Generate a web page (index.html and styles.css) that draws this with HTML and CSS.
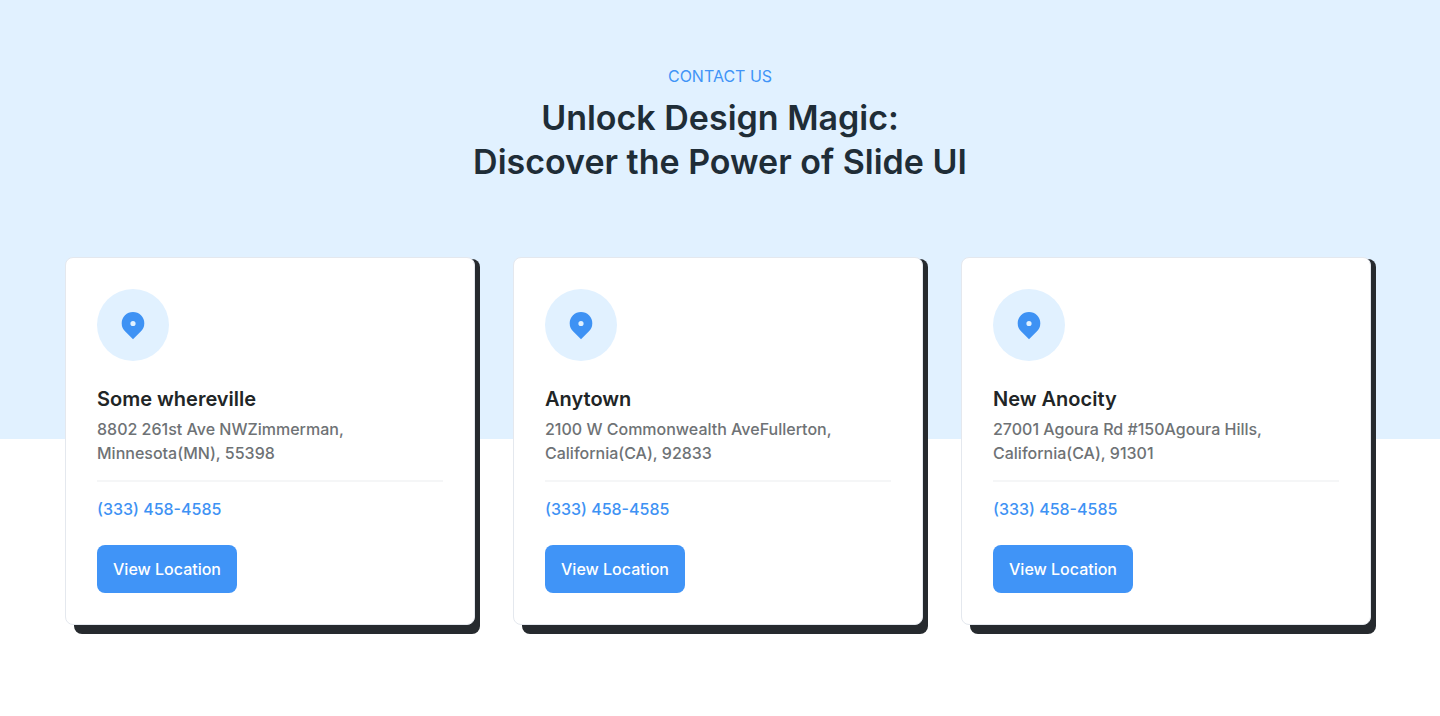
FILE: index.html
```html
<!DOCTYPE html>
<html lang="en">
<head>
<meta charset="utf-8">
<meta name="viewport" content="width=device-width, initial-scale=1">
<title>Contact us</title>
<link rel="stylesheet" href="styles.css">
</head>
<body>
<section class="contact">
  <header class="intro">
    <p class="eyebrow">CONTACT US</p>
    <h1 class="title">Unlock Design Magic:<br>Discover the Power of Slide UI</h1>
  </header>
  <div class="cards">
    <article class="card">
      <span class="badge"><svg class="pin" viewBox="0 0 32 32" aria-hidden="true"><path fill-rule="evenodd" d="M8 6.300a11.300 11.300 0 0 1 16 16l-8 8-8-8a11.300 11.300 0 0 1 0-16ZM16 11.900a2.600 2.600 0 1 0 0 5.200 2.600 2.600 0 0 0 0-5.200Z"/></svg></span>
      <h2 class="city">Some whereville</h2>
      <p class="address">8802 261st Ave NWZimmerman,<br>Minnesota(MN), 55398</p>
      <hr class="rule">
      <a class="phone" href="tel:3334584585">(333) 458-4585</a>
      <button class="button" type="button">View Location</button>
    </article>
    <article class="card">
      <span class="badge"><svg class="pin" viewBox="0 0 32 32" aria-hidden="true"><path fill-rule="evenodd" d="M8 6.300a11.300 11.300 0 0 1 16 16l-8 8-8-8a11.300 11.300 0 0 1 0-16ZM16 11.900a2.600 2.600 0 1 0 0 5.200 2.600 2.600 0 0 0 0-5.200Z"/></svg></span>
      <h2 class="city">Anytown</h2>
      <p class="address">2100 W Commonwealth AveFullerton,<br>California(CA), 92833</p>
      <hr class="rule">
      <a class="phone" href="tel:3334584585">(333) 458-4585</a>
      <button class="button" type="button">View Location</button>
    </article>
    <article class="card">
      <span class="badge"><svg class="pin" viewBox="0 0 32 32" aria-hidden="true"><path fill-rule="evenodd" d="M8 6.300a11.300 11.300 0 0 1 16 16l-8 8-8-8a11.300 11.300 0 0 1 0-16ZM16 11.900a2.600 2.600 0 1 0 0 5.200 2.600 2.600 0 0 0 0-5.200Z"/></svg></span>
      <h2 class="city">New Anocity</h2>
      <p class="address">27001 Agoura Rd #150Agoura Hills,<br>California(CA), 91301</p>
      <hr class="rule">
      <a class="phone" href="tel:3334584585">(333) 458-4585</a>
      <button class="button" type="button">View Location</button>
    </article>
  </div>
</section>
</body>
</html>
```
FILE: styles.css
```css
* { box-sizing: border-box; margin: 0; }
body {
  background: #fff;
  color: #1f2d37;
  font: 400 16px/24px Inter, "Liberation Sans", sans-serif;
}
.contact {
  isolation: isolate;
  padding: 64px 64px 82px;
  background: linear-gradient(#e1f1ff 439px, #fff 439px);
}
.intro { text-align: center; }
.eyebrow { color: #4094f7; }
.title {
  margin-top: 8px;
  font-size: 34px;
  font-weight: 600;
  line-height: 44px;
}
.cards {
  display: grid;
  grid-template-columns: repeat(3, 1fr);
  gap: 32px;
  margin-top: 72px;
}
.card {
  position: relative;
  display: flex;
  flex-direction: column;
  align-items: flex-start;
  margin: 1px 5px 0 1px;
  padding: 31px;
  border: 1px solid #e4e8ee;
  border-radius: 8px;
  background: #fff;
}
/* Dark slab behind the card, inset at its top and left */
.card::before {
  content: "";
  position: absolute;
  z-index: -1;
  inset: 1px -6px -10px 8px;
  border-radius: 8px;
  background: #262a2e;
}
.badge {
  display: grid;
  place-items: center;
  width: 72px;
  height: 72px;
  border-radius: 50%;
  background: #e1f1ff;
}
.pin { width: 32px; height: 32px; fill: #3e92f4; }
.city {
  margin-top: 24px;
  color: #212526;
  font-size: 20px;
  font-weight: 600;
  line-height: 28px;
}
.address { margin-top: 4px; color: #6e7275; font-weight: 500; }
.rule {
  width: 100%;
  margin: 15px 0;
  border: 0;
  border-top: 2px solid #f5f6f7;
}
.phone { color: #3e92f4; font-weight: 500; text-decoration: none; }
.button {
  height: 48px;
  margin-top: 24px;
  padding: 0 16px;
  border: 0;
  border-radius: 8px;
  background: #4094f7;
  color: #fff;
  font: inherit;
  font-weight: 500;
  cursor: pointer;
}
```
